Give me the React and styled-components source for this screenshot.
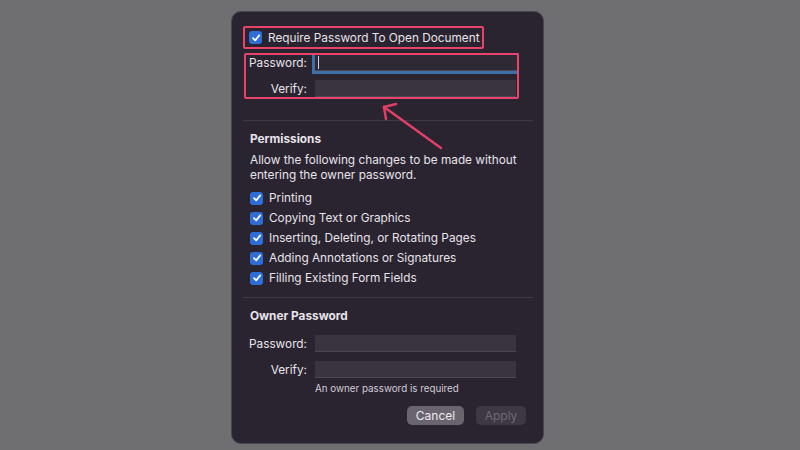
import React from "react";
import styled, { createGlobalStyle } from "styled-components";

const Global = createGlobalStyle`
  html, body { margin: 0; padding: 0; }
  body { background: #6f6e71; font-family: Inter, "Noto Sans", sans-serif; }
  * { box-sizing: border-box; }
`;

const Page = styled.div`
  width: 800px;
  height: 450px;
  overflow: hidden;
  background: #6f6e71;
  padding: 11px 0 0 231px;
`;

const Dialog = styled.div`
  position: relative;
  width: 313px;
  height: 433px;
  background: #2a2330;
  border: 1px solid #4b4652;
  border-radius: 10px;
  padding: 0 10px 0 11px;
  display: flex;
  flex-direction: column;
  color: #e7e4ea;
  font-size: 11.8px;
  white-space: nowrap;
`;

const Highlight = styled.div`
  position: relative;
  &::after {
    content: "";
    position: absolute;
    inset: 0;
    border: 2px solid #e8436a;
    border-radius: 2px;
    z-index: 2;
    pointer-events: none;
  }
`;

const ReqBox = styled(Highlight)`
  margin-top: 14px;
  width: 241px;
  height: 23px;
  display: flex;
  align-items: center;
  gap: 6px;
  padding-left: 6px;
`;

const FieldBox = styled(Highlight)`
  margin-top: 4px;
  margin-left: 1px;
  width: 275px;
  height: 46px;
  display: flex;
  flex-direction: column;
  gap: 9px;
  padding: 1px 0 0 2px;
  overflow: hidden;
`;

const Row = styled.div`
  display: grid;
  grid-template-columns: ${(p) => p.$label}px ${(p) => p.$input || 201}px;
  column-gap: 8px;
  align-items: center;
  height: 17px;
`;

const Label = styled.span`
  text-align: right;
`;

const Input = styled.div`
  height: 17px;
  background: #3a3340;
  border-bottom: 1px solid #4d4653;
  position: relative;
  ${(p) =>
    p.$focused &&
    `
    box-shadow: 0 0 0 3px #3d6fa8;
    background: #2f2935;
    &::after {
      content: "";
      position: absolute;
      left: 3px; top: 2px;
      width: 1px; height: 13px;
      background: #d8d5dc;
    }
  `}
`;

const Separator = styled.div`
  height: 1px;
  background: #3f3945;
  width: 290px;
  margin-top: ${(p) => p.$top}px;
`;

const Section = styled.div`
  padding-left: 7px;
  display: flex;
  flex-direction: column;
`;

const Heading = styled.div`
  font-weight: 700;
  height: 16px;
  line-height: 16px;
  margin-top: 10px;
`;

const Desc = styled.div`
  margin-top: 6px;
  line-height: 15px;
`;

const List = styled.div`
  margin-top: 5px;
  display: flex;
  flex-direction: column;
`;

const CheckRow = styled.label`
  display: flex;
  align-items: center;
  gap: 6px;
  height: 20px;
`;

const Box = styled.span`
  width: 13px;
  height: 13px;
  border-radius: 3px;
  background: #2f6ed7;
  display: inline-flex;
  align-items: center;
  justify-content: center;
  flex: none;
`;

const OwnerSection = styled.div`
  display: flex;
  flex-direction: column;
`;

const OwnerRows = styled.div`
  margin-top: 11px;
  display: flex;
  flex-direction: column;
  gap: 9px;
`;

const Note = styled.div`
  margin-top: 5px;
  padding-left: 72px;
  font-size: 9.8px;
  line-height: 12px;
  color: #d2ced6;
`;

const Buttons = styled.div`
  margin-top: 11px;
  display: flex;
  justify-content: flex-end;
  gap: 12px;
  padding-right: 7px;
`;

const Button = styled.div`
  height: 19px;
  width: ${(p) => p.$w}px;
  border-radius: 5px;
  background: ${(p) => (p.$disabled ? "#3e3844" : "#6a6470")};
  color: ${(p) => (p.$disabled ? "#6f6975" : "#ecebee")};
  display: flex;
  align-items: center;
  justify-content: center;
  font-size: 12px;
`;

const ArrowOverlay = styled.svg`
  position: absolute;
  left: -1px;
  top: -1px;
  pointer-events: none;
`;

const Check = () => (
  <Box>
    <svg width="10" height="10" viewBox="0 0 10 10">
      <path d="M2 5.2 L4.2 7.4 L8.2 2.4" fill="none" stroke="#fff" strokeWidth="1.7" strokeLinecap="round" strokeLinejoin="round" />
    </svg>
  </Box>
);

const permissions = [
  "Printing",
  "Copying Text or Graphics",
  "Inserting, Deleting, or Rotating Pages",
  "Adding Annotations or Signatures",
  "Filling Existing Form Fields",
];

export default function App() {
  return (
    <>
      <Global />
      <Page>
        <Dialog>
          <ReqBox>
            <Check />
            <span>Require Password To Open Document</span>
          </ReqBox>
          <FieldBox>
            <Row $label={61} $input={215}>
              <Label>Password:</Label>
              <Input $focused />
            </Row>
            <Row $label={61}>
              <Label>Verify:</Label>
              <Input />
            </Row>
          </FieldBox>
          <Separator $top={21} />
          <Section>
            <Heading>Permissions</Heading>
            <Desc>
              Allow the following changes to be made without
              <br />
              entering the owner password.
            </Desc>
            <List>
              {permissions.map((p) => (
                <CheckRow key={p}>
                  <Check />
                  <span>{p}</span>
                </CheckRow>
              ))}
            </List>
          </Section>
          <Separator $top={9} />
          <OwnerSection>
            <Section>
              <Heading>Owner Password</Heading>
            </Section>
            <OwnerRows>
              <Row $label={64}>
                <Label>Password:</Label>
                <Input />
              </Row>
              <Row $label={64}>
                <Label>Verify:</Label>
                <Input />
              </Row>
            </OwnerRows>
            <Note>An owner password is required</Note>
            <Buttons>
              <Button $w={57}>Cancel</Button>
              <Button $w={50} $disabled>Apply</Button>
            </Buttons>
          </OwnerSection>
          <ArrowOverlay width="313" height="433" viewBox="0 0 313 433">
            <g stroke="#e23f66" strokeWidth="2.5" strokeLinecap="round" fill="none">
              <path d="M210 137 L153 96" />
              <path d="M153 96 L155 108" />
              <path d="M153 96 L165 93" />
            </g>
          </ArrowOverlay>
        </Dialog>
      </Page>
    </>
  );
}
